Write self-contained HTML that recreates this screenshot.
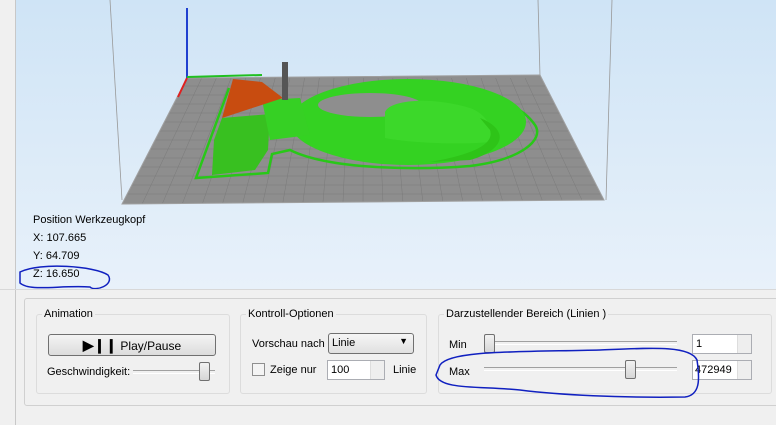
<!DOCTYPE html>
<html><head><style>
body{margin:0;width:776px;height:425px;overflow:hidden;background:#f0f0f0;font-family:"Liberation Sans",sans-serif;font-size:11px;color:#000;position:relative}
.abs{position:absolute}
.grp{position:absolute;border:1px solid #dcdcdc;border-radius:3px}
.lbl{position:absolute;background:#f0f0f0;padding:0 2px}
.btn{position:absolute;border:1px solid #707070;border-radius:3px;background:linear-gradient(#f4f4f4,#dcdcdc);text-align:center}
.inp{position:absolute;background:#fff;border:1px solid #abadb3}
.spin{position:absolute;width:13px;border-left:1px solid #ddd;background:#eee}
.track{position:absolute;height:2px;border-top:1px solid #a0a0a0;border-bottom:1px solid #fff}
.thumb{position:absolute;width:9px;height:17px;border:1px solid #707070;border-radius:2px;background:linear-gradient(#f2f2f2,#d6d6d6)}
</style></head><body>
<div class="abs" style="left:0;top:0;width:15px;height:425px;background:#f0f0f0;border-right:1px solid #c8c8c8"></div>
<div class="abs" style="left:16px;top:0;width:760px;height:289px;background:linear-gradient(#cfe4f6,#e8f1fa)"></div>
<svg class="abs" style="left:0;top:0" width="776" height="300">
<defs><clipPath id="bed"><polygon points="187,78 540,75 604,200 122,204"/></clipPath></defs>
<line x1="110" y1="0" x2="122" y2="200" stroke="#999" stroke-width="0.8"/>
<line x1="538" y1="0" x2="540" y2="76" stroke="#999" stroke-width="0.8"/>
<line x1="612" y1="0" x2="606" y2="200" stroke="#999" stroke-width="0.8"/>
<polygon points="187,78 540,75 604,200 122,204" fill="#8e8e8e"/>
<g clip-path="url(#bed)" stroke="#7a7a7a" stroke-width="0.5">
<path d="M100,86H620M100,95H620M100,104H620M100,113H620M100,122H620M100,131H620M100,140H620M100,149H620M100,158H620M100,167H620M100,176H620M100,185H620M100,194H620"/>
<path d="M201.7,78L142.1,204M216.4,78L162.2,204M231.1,78L182.2,204M245.8,78L202.3,204M260.5,78L222.4,204M275.2,78L242.5,204M289.9,78L262.6,204M304.6,78L282.6,204M319.3,78L302.7,204M334,78L322.8,204M348.7,78L342.9,204M363.4,78L363,204M378.1,78L383,204M392.8,78L403.1,204M407.5,78L423.2,204M422.2,78L443.3,204M436.9,78L463.4,204M451.6,78L483.4,204M466.3,78L503.5,204M481,78L523.6,204M495.7,78L543.7,204M510.4,78L563.8,204M525.1,78L583.8,204"/>
</g>
<polygon points="187,78 540,75 604,200 122,204" fill="none" stroke="#a0a0a0"/>
<line x1="187" y1="8" x2="187" y2="78" stroke="#2040d0" stroke-width="2"/>
<line x1="187" y1="77" x2="262" y2="75" stroke="#20c020" stroke-width="2"/>
<line x1="187" y1="78" x2="178" y2="97" stroke="#e02020" stroke-width="2"/>
<path d="M229,88 L196,178 L268,173 L272,154 L290,150 C330,170 420,170 470,166 C520,160 545,140 535,125 C528,115 520,110 512,106" fill="none" stroke="#28c818" stroke-width="2.5"/>
<path d="M222,118 L270,114 L268,150 L255,170 L212,175 L214,140 Z" fill="#38c020"/>
<ellipse cx="408" cy="122" rx="118" ry="43" fill="#34d222"/>
<ellipse cx="370" cy="105" rx="52" ry="12" fill="#8e8e8e"/>
<path d="M385,112 C390,100 430,96 470,108 C490,115 495,135 490,142 C460,145 410,143 385,138 Z" fill="#3cd82a"/>
<path d="M480,118 C510,130 505,150 470,160 L430,162 C470,155 495,145 490,130 Z" fill="#2ec418"/>
<path d="M262,100 L300,98 L310,135 L270,140 Z" fill="#36d024"/>
<polygon points="233,79 262,82 283,98 222,118" fill="#c84c10"/>
<rect x="282" y="62" width="6" height="38" fill="#555"/>
<path d="M20,272 C40,262 95,266 108,275 C115,285 95,292 90,287 C60,285 30,292 20,283 Z" fill="none" stroke="#1020c0" stroke-width="1.5"/>
</svg>
<div class="abs" style="left:33px;top:214px">Position Werkzeugkopf</div>
<div class="abs" style="left:33px;top:232px">X: 107.665</div>
<div class="abs" style="left:33px;top:250px">Y: 64.709</div>
<div class="abs" style="left:33px;top:268px">Z: 16.650</div>
<div class="abs" style="left:0;top:289px;width:776px;height:1px;background:#d8d8d8"></div>
<div class="grp" style="left:24px;top:298px;width:760px;height:106px;border-color:#d0d0d0;background:#f0f0f0"></div>
<div class="grp" style="left:36px;top:314px;width:192px;height:78px"></div>
<div class="lbl" style="left:42px;top:308px">Animation</div>
<div class="btn" style="left:48px;top:334px;width:166px;height:20px;line-height:20px;font-size:12px"><b style="font-size:14px">▶❙❙</b> Play/Pause</div>
<div class="abs" style="left:47px;top:366px">Geschwindigkeit:</div>
<div class="track" style="left:133px;top:370px;width:82px"></div>
<div class="thumb" style="left:199px;top:362px"></div>
<div class="grp" style="left:240px;top:314px;width:185px;height:78px"></div>
<div class="lbl" style="left:246px;top:308px">Kontroll-Optionen</div>
<div class="abs" style="left:252px;top:338px">Vorschau nach</div>
<div class="abs" style="left:328px;top:333px;width:84px;height:19px;border:1px solid #707070;border-radius:3px;background:linear-gradient(#f6f6f6,#e0e0e0)"><span style="position:absolute;left:3px;top:3px">Linie</span><span style="position:absolute;right:5px;top:2px;font-size:9px">▼</span></div>
<div class="abs" style="left:252px;top:363px;width:11px;height:11px;border:1px solid #8f8f8f;background:#f4f4f4"></div>
<div class="abs" style="left:270px;top:364px">Zeige nur</div>
<div class="inp" style="left:327px;top:360px;width:56px;height:18px"><span style="position:absolute;left:3px;top:3px">100</span><div class="spin" style="right:0;top:0;height:18px"></div></div>
<div class="abs" style="left:393px;top:364px">Linie</div>
<div class="grp" style="left:438px;top:314px;width:332px;height:78px"></div>
<div class="lbl" style="left:444px;top:308px">Darzustellender Bereich (Linien )</div>
<div class="abs" style="left:449px;top:339px">Min</div>
<div class="track" style="left:484px;top:341px;width:193px"></div>
<div class="thumb" style="left:484px;top:334px"></div>
<div class="inp" style="left:692px;top:334px;width:58px;height:18px"><span style="position:absolute;left:3px;top:3px">1</span><div class="spin" style="right:0;top:0;height:18px"></div></div>
<div class="abs" style="left:449px;top:366px">Max</div>
<div class="track" style="left:484px;top:367px;width:193px"></div>
<div class="thumb" style="left:625px;top:360px"></div>
<div class="inp" style="left:692px;top:360px;width:58px;height:18px"><span style="position:absolute;left:2px;top:3px">472949</span><div class="spin" style="right:0;top:0;height:18px"></div></div>
<svg class="abs" style="left:0;top:0" width="776" height="425"><path d="M440,365 C450,350 520,352 600,350 C650,348 690,345 697,360 C700,380 700,395 685,397 C620,398 560,395 520,390 C480,386 440,390 436,375 Z" fill="none" stroke="#1020c0" stroke-width="1.5"/></svg>
</body></html>
